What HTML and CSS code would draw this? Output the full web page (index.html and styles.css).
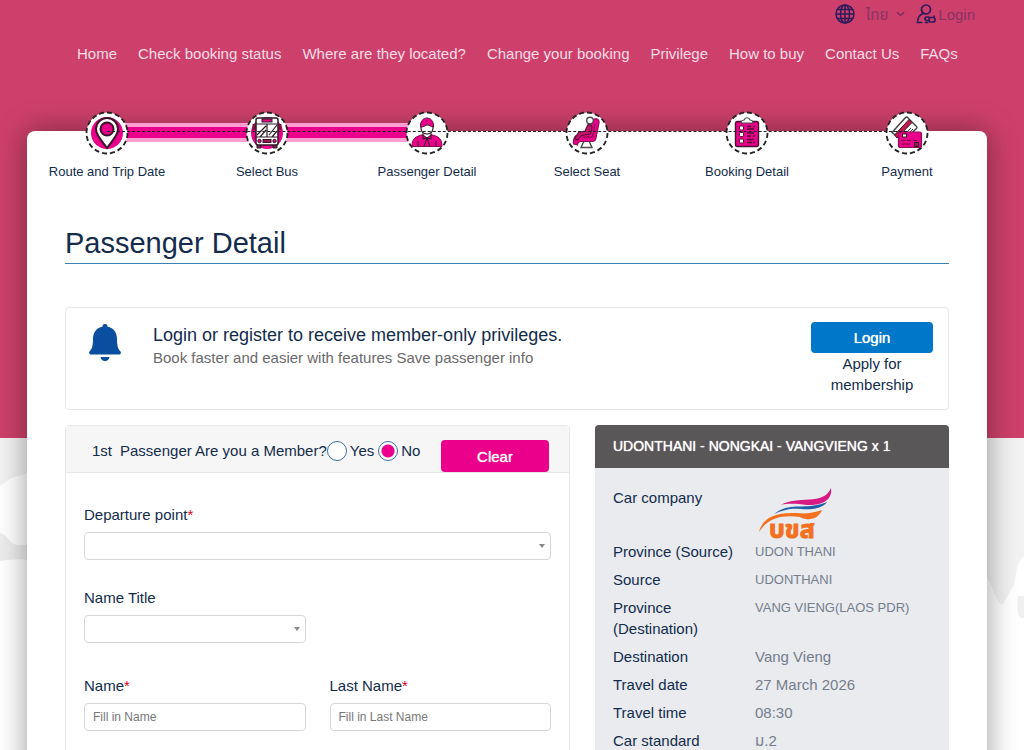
FILE: index.html
```html
<!DOCTYPE html>
<html lang="en">
<head>
    <meta charset="UTF-8">
    <meta name="viewport" content="width=device-width, initial-scale=1.0">
    <title>Passenger Detail</title>
    <link rel="stylesheet" href="styles.css">
</head>
<body>
    <header class="site-header">
        <div class="top-bar">
            <svg class="globe" viewBox="0 0 20 20" width="20" height="20" aria-hidden="true">
                <g fill="none" stroke="#2c1a5a" stroke-width="1.5">
                    <circle cx="10" cy="10" r="9" />
                    <ellipse cx="10" cy="10" rx="4.5" ry="9" />
                    <path d="M10 1v18M1 10h18M2.5 5.5h15M2.5 14.5h15" />
                </g>
            </svg>
            <button class="language" type="button">
                <span lang="th">ไทย</span>
                <svg viewBox="0 0 10 6" width="9" height="6" aria-hidden="true"><path d="M1 1l4 3.5L9 1" fill="none" stroke="#6b2a5e" stroke-width="1.3" /></svg>
            </button>
            <a class="login-link" href="#">
                <svg viewBox="0 0 20 20" width="20" height="20" aria-hidden="true">
                    <g fill="none" stroke="#2c1a5a" stroke-width="1.7" stroke-linecap="round">
                        <circle cx="10" cy="5.500" r="4.500" />
                        <path d="M7 9.500C3.500 11 1.500 14 1.500 18.500h4M9.500 18.500h2" />
                        <path d="M13 13h-3a2 2 0 0 0 0 3.500h3" />
                        <rect x="13" y="13.500" width="6" height="4.500" rx="2" />
                        <path d="M18 13v-1" />
                    </g>
                </svg>
                <span>Login</span>
            </a>
        </div>
        <nav class="main-nav">
            <a href="#">Home</a>
            <a href="#">Check booking status</a>
            <a href="#">Where are they located?</a>
            <a href="#">Change your booking</a>
            <a href="#">Privilege</a>
            <a href="#">How to buy</a>
            <a href="#">Contact Us</a>
            <a href="#">FAQs</a>
        </nav>
    </header>

    <main class="card">
        <ol class="steps">
            <li class="step done">
                <svg class="step-icon" viewBox="0 0 44 44" width="44" height="44" aria-hidden="true">
                    <circle class="ring" cx="22" cy="22" r="20.500" />
                    <circle cx="22" cy="22" r="16" fill="#eb008b" />
                    <path d="M22 37C17 30 11 24.500 11 18a11 11 0 0 1 22 0C33 24.500 27 30 22 37z" fill="#fff" stroke="#3a1526" stroke-width="2" />
                    <circle cx="22" cy="18" r="6.500" fill="#eb008b" stroke="#3a1526" stroke-width="2" />
                </svg>
                Route and Trip Date
            </li>
            <li class="step done">
                <svg class="step-icon" viewBox="0 0 44 44" width="44" height="44" aria-hidden="true">
                    <circle class="ring" cx="22" cy="22" r="20.500" />
                    <circle cx="22" cy="22" r="16" fill="#eb008b" />
                    <path d="M12 33h4v4h-4zM28 33h4v4h-4z" fill="#8b1a5c" stroke="#2b1a22" />
                    <path d="M9 13v6M35 13v6" stroke="#7b123f" stroke-width="3" />
                    <rect x="11" y="7" width="22" height="27" rx="2" fill="#fff" stroke="#2b1a22" stroke-width="1.500" />
                    <rect x="17" y="8" width="10" height="3" fill="#eb008b" stroke="#2b1a22" />
                    <path d="M11 13h22M11 26h22M22 13v13M12 24l9-9M15 26l6-7M24 24l8-10M27 26l5-6" fill="none" stroke="#2b1a22" stroke-width="1.200" />
                    <circle cx="14.500" cy="30" r="1.700" fill="#eb008b" stroke="#2b1a22" />
                    <circle cx="29.500" cy="30" r="1.700" fill="#eb008b" stroke="#2b1a22" />
                    <rect x="18" y="28.500" width="8" height="3" fill="#a6114e" stroke="#2b1a22" />
                </svg>
                Select Bus
            </li>
            <li class="step">
                <svg class="step-icon" viewBox="0 0 44 44" width="44" height="44" aria-hidden="true">
                    <circle class="ring" cx="22" cy="22" r="20.500" />
                    <path d="M7 35.500c0-8 3-10 11.500-12h7c8.500 2 11.500 4 11.500 12z" fill="#eb008b" stroke="#8a1050" />
                    <path d="M18 21h8v4l-4 3-4-3z" fill="#fff" stroke="#2b1a22" />
                    <path d="M16 14v3c0 8 12 8 12 0v-3z" fill="#fff" stroke="#2b1a22" stroke-width="1.200" />
                    <path d="M15.500 16c-1-12 14-12 13 0-3-1-4-1-6-3-2 2-4 3-7 3z" fill="#eb008b" stroke="#5a1238" />
                    <path d="M22 27l-4-3v4zM22 27l4-3v4zM22 27l-3 8.500M22 27l3 8.500M13 30v5.500M31 30v5.500" fill="#eb008b" stroke="#2b1a22" />
                </svg>
                Passenger Detail
            </li>
            <li class="step">
                <svg class="step-icon" viewBox="0 0 44 44" width="44" height="44" aria-hidden="true">
                    <circle class="ring" cx="22" cy="22" r="20.500" />
                    <path d="M19 30l-3 6.500h11L24 30z" fill="#fff" stroke="#4b4b4b" stroke-width="1.400" />
                    <path d="M27 9l4-1.500q3.500 1 3 4.500l-3 15q-.5 3.500-4 3.500H16q-3 0-3.500 3.500l-4-1q-1-8 5-9.500l6.500-1z" fill="#eb008b" stroke="#8a1050" stroke-width="1.200" stroke-linejoin="round" />
                    <path d="M23 13.500q4 0 4 3L25.500 23l-9 1.500-4 4.500-3-1.500 4-6 6.500-1.500z" fill="#c8106e" stroke="#4a1232" stroke-width="1.100" stroke-linejoin="round" />
                    <path d="M30 13l-2.500 13H18" fill="none" stroke="#6a1238" />
                    <circle cx="25" cy="9.500" r="3.300" fill="#fff" stroke="#4b4b4b" stroke-width="1.400" />
                </svg>
                Select Seat
            </li>
            <li class="step">
                <svg class="step-icon" viewBox="0 0 44 44" width="44" height="44" aria-hidden="true">
                    <circle class="ring" cx="22" cy="22" r="20.500" />
                    <rect x="10.500" y="10.500" width="23" height="25" rx="2" fill="#eb008b" stroke="#4a1232" stroke-width="1.400" />
                    <path d="M16 12c0-2 2-3 3-3 1-3 5-3 6 0 1 0 3 1 3 3z" fill="#fff" stroke="#4b4b4b" stroke-width="1.200" />
                    <g fill="#fff" stroke="#4a1232">
                        <rect x="14.500" y="15" width="4" height="4" rx="1" />
                        <rect x="14.500" y="21.500" width="4" height="4" rx="1" />
                        <rect x="14.500" y="28" width="4" height="4" rx="1" />
                    </g>
                    <path d="M22 15.500h4M22 18h7M22 22h7M22 25h4M22 28.500h7M22 31.500h5M28 15.500h2M28 25h2M28 31.500h2" stroke="#4a1232" stroke-width="1.300" />
                </svg>
                Booking Detail
            </li>
            <li class="step">
                <svg class="step-icon" viewBox="0 0 44 44" width="44" height="44" aria-hidden="true">
                    <circle class="ring" cx="22" cy="22" r="20.500" />
                    <path d="M7 21.500L20.500 6.500q1-1 2 0l9 9q1 1 0 2L18 30z" fill="#fff" stroke="#3f3f3f" stroke-width="1.400" />
                    <path d="M9.500 24L24 8.500l3 3L12 27z" fill="#c41a4d" stroke="#3a1526" />
                    <path d="M22 21l4-4M25 21l3-3" stroke="#3f3f3f" />
                    <rect x="13.500" y="21" width="23" height="15.500" rx="2" fill="#eb008b" stroke="#8a1050" stroke-width="1.200" />
                    <rect x="17.500" y="23" width="4" height="3" fill="#fff" stroke="#3a1526" />
                    <path d="M16 29.500h4M22 29.500h4M28 29.500h4M17 33h8" stroke="#6a1238" stroke-width="1.200" />
                    <path d="M29.500 31.500h4v4h-4z" fill="#a51253" stroke="#2b1a22" />
                </svg>
                Payment
            </li>
        </ol>

        <div class="content">
            <h1>Passenger Detail</h1>

            <section class="member-box">
                <svg class="bell" viewBox="0 0 32 38" width="32" height="38" aria-hidden="true">
                    <path d="M16 0a2.500 2.500 0 0 1 2.500 2.800C25 4 28 9 28 15c0 7 1 10 3.500 12.500 1 1.500 0 3-1.500 3H2c-1.500 0-2.500-1.500-1.500-3C3 25 4 22 4 15 4 9 7 4 13.500 2.800A2.500 2.500 0 0 1 16 0zM11.500 33h9c-.5 5.500-8.500 5.500-9 0z" fill="#0a4ea0" />
                </svg>
                <div class="member-text">
                    <h2>Login or register to receive member-only privileges.</h2>
                    <p>Book faster and easier with features Save passenger info</p>
                </div>
                <div class="member-actions">
                    <button class="btn btn-blue" type="button">Login</button>
                    <a href="#">Apply for membership</a>
                </div>
            </section>

            <div class="columns">
                <form class="passenger">
                    <div class="passenger-head">
                        <span>1st</span>
                        <span id="member-question">Passenger Are you a Member?</span>
                        <div class="radios" role="radiogroup" aria-labelledby="member-question">
                            <label><input type="radio" name="member" value="yes">Yes</label>
                            <label><input type="radio" name="member" value="no" checked>No</label>
                        </div>
                        <button class="btn btn-pink" type="reset">Clear</button>
                    </div>
                    <div class="passenger-body">
                        <div class="field wide">
                            <label for="departure">Departure point<span class="required">*</span></label>
                            <select id="departure"><option value=""></option></select>
                        </div>
                        <div class="field title-field">
                            <label for="name-title">Name Title</label>
                            <select id="name-title"><option value=""></option></select>
                        </div>
                        <div class="field name-field">
                            <label for="first-name">Name<span class="required">*</span></label>
                            <input type="text" id="first-name" placeholder="Fill in Name">
                        </div>
                        <div class="field">
                            <label for="last-name">Last Name<span class="required">*</span></label>
                            <input type="text" id="last-name" placeholder="Fill in Last Name">
                        </div>
                    </div>
                </form>

                <aside class="summary">
                    <h2>UDONTHANI - NONGKAI - VANGVIENG x 1</h2>
                    <table>
                        <tr class="company">
                            <th>Car company</th>
                            <td>
                                <svg class="logo" viewBox="0 0 80 54" width="80" height="54" role="img" aria-label="บขส">
                                    <path d="M26 18C42 8 69 19 76 1c2 13-11 18-24 17-10-1-18-2-26 0z" fill="#d81b84" />
                                    <path d="M19 27c16-13 32-3 53-12-5 7-17 8-26 7-11-1-18 1-27 5z" fill="#1f5fa8" />
                                    <path d="M4 45C9 27 26 26 41 26c10 1 17 0 26-3-3 7-9 10-16 9-2 0-4-1-6-2C30 28 14 29 4 45z" fill="#f37021" />
                                    <text class="logo-text" lang="th" x="14" y="51">บขส</text>
                                </svg>
                            </td>
                        </tr>
                        <tr><th>Province (Source)</th><td class="place">UDON THANI</td></tr>
                        <tr><th>Source</th><td class="place">UDONTHANI</td></tr>
                        <tr><th>Province (Destination)</th><td class="place">VANG VIENG(LAOS PDR)</td></tr>
                        <tr><th>Destination</th><td>Vang Vieng</td></tr>
                        <tr><th>Travel date</th><td>27 March 2026</td></tr>
                        <tr><th>Travel time</th><td>08:30</td></tr>
                        <tr><th>Car standard</th><td lang="th">ม.2</td></tr>
                    </table>
                </aside>
            </div>
        </div>
    </main>
</body>
</html>
```
FILE: styles.css
```css
*,
*::before,
*::after {
    box-sizing: border-box;
}

html {
    scrollbar-width: none;
}

body {
    margin: 0;
    padding: 0 37px 0 27px;
    font-family: "Liberation Sans", "Noto Sans Thai", Arial, sans-serif;
    font-size: 15px;
    line-height: 21px;
    color: #132c4c;
    /* pink band above a pale map */
    background-color: #fff;
    background-image:
        linear-gradient(#cd406b, #cd406b),
        url("data:image/svg+xml,%3Csvg xmlns='http://www.w3.org/2000/svg' width='40' height='200'%3E%3Cpath fill='%23f2f2f2' d='M0 0h40v38c-8-4-14-3-20 0-8 0-14 6-20 10z'/%3E%3Cpath fill='%23ededed' d='M0 95c8 2 10 12 18 12 8 1 14-2 22-4v25c-12-8-22-8-40-5z'/%3E%3C/svg%3E"),
        url("data:image/svg+xml,%3Csvg xmlns='http://www.w3.org/2000/svg' width='44' height='200'%3E%3Cpath fill='%23f2f2f2' d='M0 0h44v118c-8 8-8 18-10 30-4 4-8 14-12 19-6-4-8-14-12-22L0 130z'/%3E%3Cpath fill='%23f0f0f0' d='M38 158h6v22c-6 2-8-6-6-22z'/%3E%3C/svg%3E");
    background-repeat: no-repeat;
    background-size: 100% 438px, 40px 200px, 44px 200px;
    background-position: 0 0, 0 438px, 100% 438px;
}

h1, h2, p {
    margin: 0;
    font-weight: normal;
}

a {
    color: inherit;
    text-decoration: none;
}

button, input, select {
    font: inherit;
    color: inherit;
}

/* header */
.top-bar {
    display: flex;
    align-items: center;
    justify-content: flex-end;
    gap: 11px;
    height: 28px;
    padding-right: 12px;
    color: #8b3263;
}

.language {
    display: flex;
    align-items: center;
    gap: 8px;
    padding: 0;
    border: 0;
    background: none;
}

.login-link {
    display: flex;
    align-items: center;
    gap: 2px;
}

.main-nav {
    display: flex;
    gap: 21px;
    height: 103px;
    padding: 15px 0 0 50px;
    color: #fbdde7;
    white-space: nowrap;
}

/* card and steps */
.card {
    padding-bottom: 40px;
    border-radius: 8px;
    background: #fff;
    box-shadow: 0 0 30px rgba(0, 0, 0, 0.4);
}

.steps {
    position: relative;
    display: flex;
    margin: 0;
    padding: 0;
    list-style: none;
    font-size: 13px;
    line-height: 20px;
}

/* dotted line through the middle of the icons */
.steps::after {
    content: "";
    position: absolute;
    z-index: 2;
    top: 0;
    left: calc(100% / 12);
    right: calc(100% / 12);
    border-top: 1px dashed #222;
}

.step {
    position: relative;
    display: flex;
    flex: 1;
    flex-direction: column;
    align-items: center;
    gap: 7px;
    margin-top: -20px;
}

.step.done::before {
    content: "";
    position: absolute;
    top: 12px;
    left: 50%;
    width: 100%;
    height: 19px;
    border: solid #fb9fd3;
    border-width: 4px 0;
    background: #eb008b;
}

.step-icon {
    position: relative;
    z-index: 1;
}

.ring {
    fill: #fff;
    stroke: #222;
    stroke-width: 1.8;
    stroke-dasharray: 5 3;
}

.content {
    padding: 43px 38px 0;
}

h1 {
    padding-bottom: 2px;
    border-bottom: 1px solid #3a7fb5;
    font-size: 29px;
    line-height: 36px;
}

/* member box */
.member-box {
    display: flex;
    gap: 32px;
    margin: 43px 0 15px;
    padding: 14px 15px 14px 23px;
    border: 1px solid #e6e8eb;
    border-radius: 4px;
}

.bell {
    margin-top: 2px;
}

.member-text {
    flex: 1;
}

.member-text h2 {
    padding-top: 1px;
    font-size: 18px;
    line-height: 24px;
}

.member-text p {
    color: #6a6a6a;
}

.member-actions {
    display: flex;
    flex-direction: column;
    width: 122px;
    text-align: center;
}

.btn {
    border: 0;
    border-radius: 4px;
    color: #fff;
    text-shadow: 0 0 1px #fff;
}

.btn-blue {
    flex: none;
    height: 31px;
    background: #0077c8;
}

.btn-pink {
    width: 108px;
    height: 32px;
    margin-left: auto;
    background: #eb008b;
}

/* two columns */
.columns {
    display: grid;
    grid-template-columns: 505fr 354fr;
    gap: 25px;
    align-items: start;
}

.passenger {
    border: 1px solid #e8e8e8;
    border-radius: 4px;
}

.passenger-head {
    display: flex;
    align-items: flex-start;
    padding: 14px 20px 0 26px;
    border-bottom: 1px solid #e8e8e8;
    background: #f6f6f6;
    white-space: nowrap;
}

#member-question {
    margin-left: 8px;
}

.radios {
    display: flex;
    gap: 4px;
}

.radios label {
    display: flex;
    align-items: center;
    gap: 3px;
}

.radios input {
    appearance: none;
    width: 20px;
    height: 20px;
    margin: 0;
    border: 1px solid #3f6f9f;
    border-radius: 50%;
    background: #fff;
}

.radios input:checked {
    background: radial-gradient(circle, #eb008b 6px, #fff 7px);
}

.passenger-body {
    display: grid;
    grid-template-columns: 1fr 1fr;
    column-gap: 24px;
    padding: 31px 18px;
}

.field {
    display: flex;
    flex-direction: column;
    gap: 7px;
}

.wide {
    grid-column: 1 / -1;
    margin-bottom: 27px;
}

.title-field {
    margin-bottom: 32px;
}

.name-field {
    grid-column: 1;
}

.required {
    color: #e3001b;
}

.field input,
.field select {
    width: 100%;
    height: 28px;
    padding: 0 8px;
    border: 1px solid #d5d7da;
    border-radius: 4px;
    background: #fff;
    font-size: 12px;
}

.field input::placeholder {
    color: #777;
}

.field select {
    appearance: none;
    background: #fff url("data:image/svg+xml,%3Csvg xmlns='http://www.w3.org/2000/svg' width='6' height='4'%3E%3Cpath fill='%23888' d='M0 0h6L3 4z'/%3E%3C/svg%3E") no-repeat right 5px center;
}

/* trip summary */
.summary {
    border-radius: 4px;
    background: #e9ebef;
}

.summary h2 {
    padding: 11px 18px;
    border-radius: 4px 4px 0 0;
    background: #5a5758;
    color: #fff;
    font-size: 14px;
    text-shadow: 0 0 1px #fff;
}

.summary table {
    width: 100%;
    padding: 19px 0;
    border-spacing: 0;
}

.summary th,
.summary td {
    padding: 0 0 7px;
    text-align: left;
    vertical-align: top;
    font-weight: normal;
}

.summary th {
    width: 160px;
    padding-left: 18px;
    padding-right: 20px;
}

.summary td {
    color: #757d8c;
}

.summary td.place {
    font-size: 13px;
}

.summary .company th,
.summary .company td {
    padding-bottom: 0;
}

.logo {
    display: block;
    overflow: visible;
}

.logo-text {
    fill: #f37021;
    stroke: #f37021;
    stroke-width: 1;
    font-size: 25px;
    font-weight: bold;
}
```
